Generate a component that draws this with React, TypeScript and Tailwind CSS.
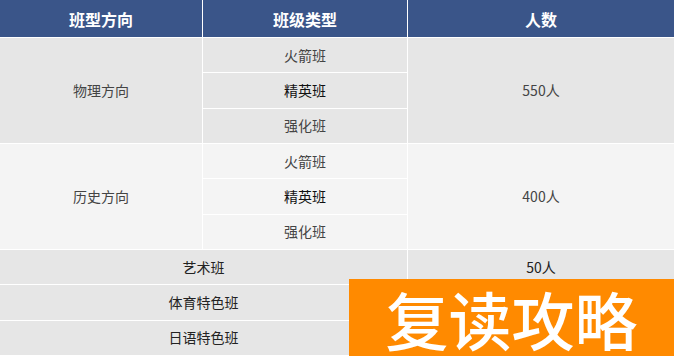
import React from "react";

const F = { fontFamily: '"Noto Sans CJK SC", "Noto Sans", sans-serif' };

export default function App() {
  const cell = "flex items-center justify-center text-[14px]";
  return (
    <div className="relative w-[674px] h-[356px] overflow-hidden bg-white" style={F}>
      <div className="grid grid-cols-[202px_204px_1fr] grid-rows-[37px_repeat(9,34.33px)] gap-px bg-white">
        <div className="flex items-center justify-center bg-[#3a5589] text-white font-bold text-[16px]">班型方向</div>
        <div className="flex items-center justify-center bg-[#3a5589] text-white font-bold text-[16px]">班级类型</div>
        <div className="flex items-center justify-center bg-[#3a5589] text-white font-bold text-[16px]">人数</div>

        <div className={`${cell} row-span-3 bg-[#e6e6e6] text-[#444]`}>物理方向</div>
        <div className={`${cell} bg-[#e6e6e6] text-[#444]`}>火箭班</div>
        <div className={`${cell} row-span-3 bg-[#e6e6e6] text-[#444]`}>550人</div>
        <div className={`${cell} bg-[#e6e6e6] text-[#111]`}>精英班</div>
        <div className={`${cell} bg-[#e6e6e6] text-[#444]`}>强化班</div>

        <div className={`${cell} row-span-3 bg-[#f4f4f4] text-[#444]`}>历史方向</div>
        <div className={`${cell} bg-[#f4f4f4] text-[#444]`}>火箭班</div>
        <div className={`${cell} row-span-3 bg-[#f4f4f4] text-[#444]`}>400人</div>
        <div className={`${cell} bg-[#f4f4f4] text-[#111]`}>精英班</div>
        <div className={`${cell} bg-[#f4f4f4] text-[#444]`}>强化班</div>

        <div className={`${cell} col-span-2 bg-[#e6e6e6] text-[#222]`}>艺术班</div>
        <div className={`${cell} bg-[#e6e6e6] text-[#222]`}>50人</div>
        <div className={`${cell} col-span-2 bg-[#e6e6e6] text-[#222]`}>体育特色班</div>
        <div className={`${cell} bg-[#e6e6e6]`}></div>
        <div className={`${cell} col-span-2 bg-[#e6e6e6] text-[#222]`}>日语特色班</div>
        <div className={`${cell} bg-[#e6e6e6]`}></div>
      </div>
      <div className="absolute left-[349px] top-[279px] w-[325px] h-[77px] bg-[#ff8a00] flex items-center justify-center">
        <span className="text-white text-[63px] leading-none font-medium">复读攻略</span>
      </div>
    </div>
  );
}
